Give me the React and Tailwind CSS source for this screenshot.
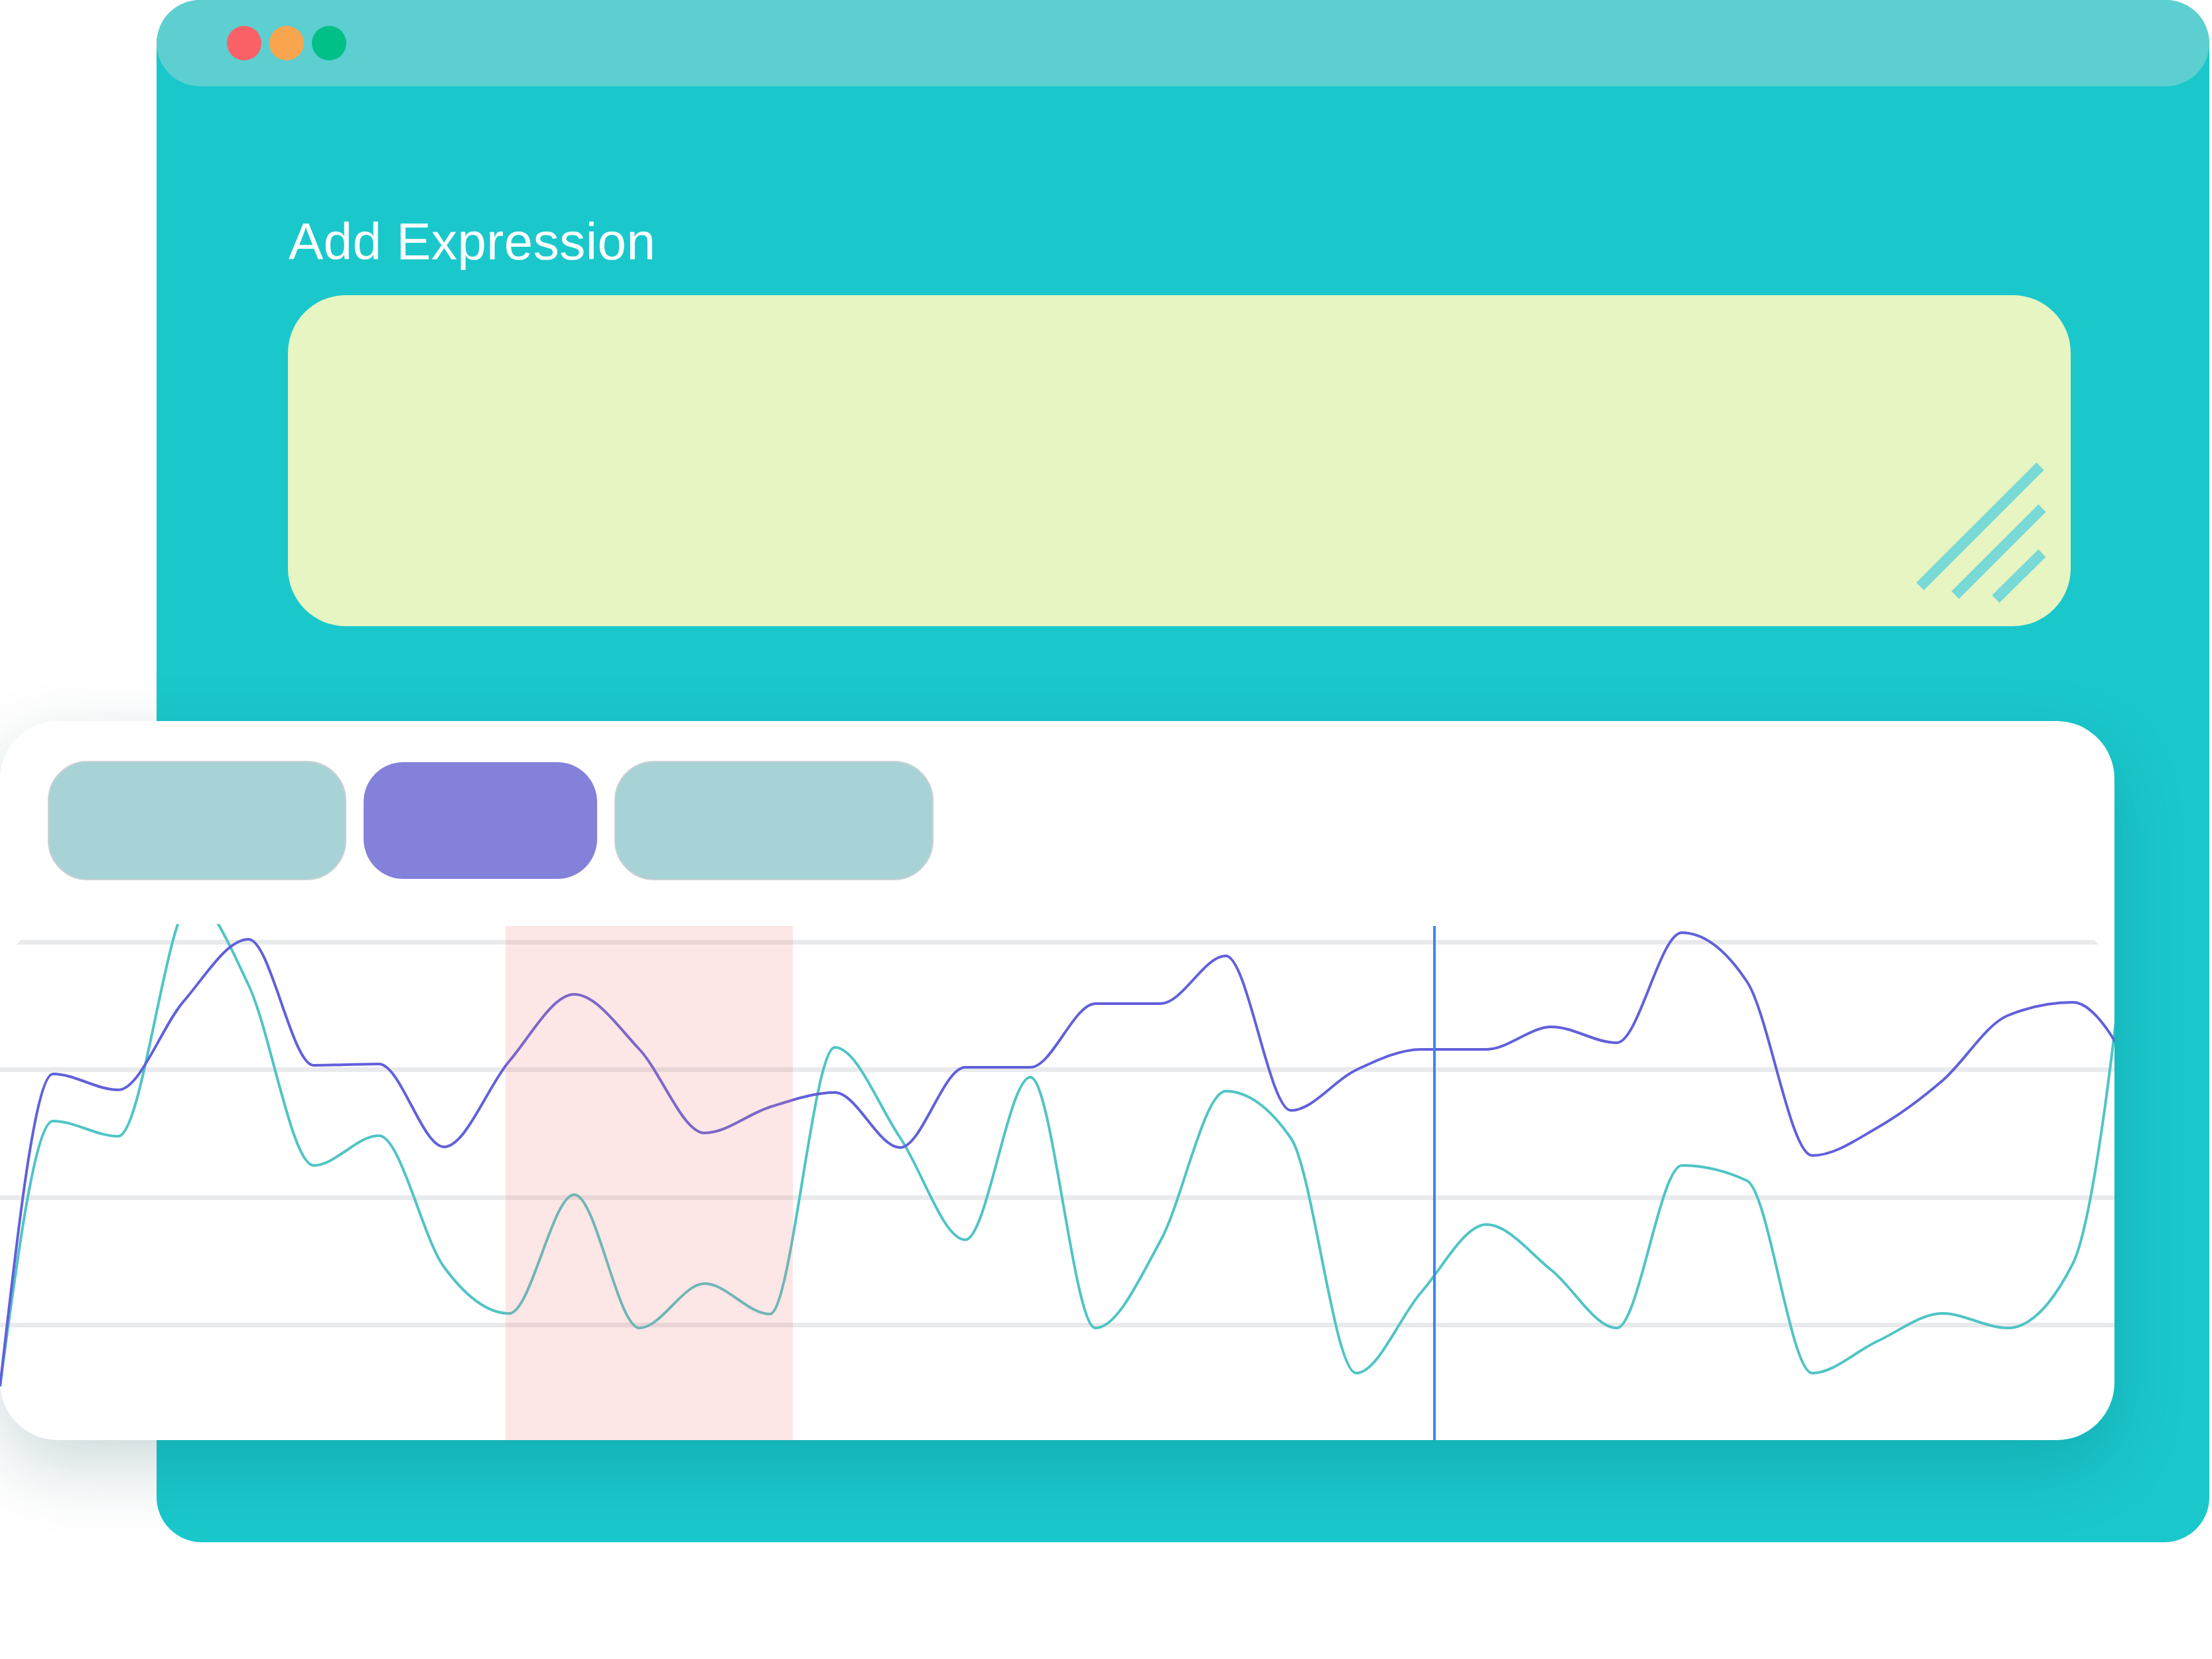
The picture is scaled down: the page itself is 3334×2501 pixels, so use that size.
import React from "react";

// the series sit on a regular x grid (x = 80 + 98.2k); y is in page pixels
const STEP = 98.2;
const gridX = (k) => 80 + STEP * k;

const purpleY = [
  1619, 1643, 1510, 1416, 1606, 1604, 1729, 1600, 1499, 1582, 1708, 1669, 1647,
  1730, 1609, 1609, 1513, 1513, 1441, 1674, 1613, 1582, 1582, 1548, 1572, 1406,
  1480, 1742, 1700, 1629, 1531, 1511, 1630,
];

const tealY = [
  1690, 1713, 1357, 1485, 1757, 1712, 1910, 1980, 1801, 2002, 1935, 1981, 1579,
  1715, 1869, 1624, 2002, 1870, 1645, 1716, 2070, 1948, 1846, 1915, 2002, 1757,
  1780, 2070, 2022, 1980, 2002, 1905, 1250,
];

// the teal spike near the top sits a little right of its grid slot
const tealX = { 2: 290 };

const toPoints = (ys, xs = {}) => [[0, 2090], ...ys.map((y, k) => [xs[k] ?? gridX(k), y])];

// monotone-x cubic, same idea as d3.curveMonotoneX
const monotonePath = (pts) => {
  const n = pts.length;
  const sign = (v) => (v < 0 ? -1 : 1);
  const t = new Array(n).fill(0);
  for (let i = 1; i < n - 1; i++) {
    const [x0, y0] = pts[i - 1];
    const [x1, y1] = pts[i];
    const [x2, y2] = pts[i + 1];
    const h0 = x1 - x0;
    const h1 = x2 - x1;
    const s0 = (y1 - y0) / h0;
    const s1 = (y2 - y1) / h1;
    const p = (s0 * h1 + s1 * h0) / (h0 + h1);
    t[i] = (sign(s0) + sign(s1)) * Math.min(Math.abs(s0), Math.abs(s1), 0.5 * Math.abs(p)) || 0;
  }
  const hA = pts[1][0] - pts[0][0];
  t[0] = (3 * (pts[1][1] - pts[0][1]) / hA - t[1]) / 2;
  const hB = pts[n - 1][0] - pts[n - 2][0];
  t[n - 1] = (3 * (pts[n - 1][1] - pts[n - 2][1]) / hB - t[n - 2]) / 2;

  let d = `M${pts[0][0]},${pts[0][1]}`;
  for (let i = 0; i < n - 1; i++) {
    const [x0, y0] = pts[i];
    const [x1, y1] = pts[i + 1];
    const dx = (x1 - x0) / 3;
    d += ` C${x0 + dx},${y0 + dx * t[i]} ${x1 - dx},${y1 - dx * t[i + 1]} ${x1},${y1}`;
  }
  return d;
};

const Chart = () => (
  <svg width="3187" height="778" viewBox="0 1393 3187 778" className="block">
    <polygon points="32,1417 3156,1417 3163,1424 24,1424" fill="#e9eaec" />
    <rect x="0" y="1609" width="3187" height="7" fill="#e9eaec" />
    <rect x="0" y="1802" width="3187" height="7" fill="#e9eaec" />
    <rect x="0" y="1994" width="3187" height="7" fill="#e9eaec" />
    <path d={monotonePath(toPoints(tealY, tealX))} fill="none" stroke="#50c4c5" strokeWidth="4" />
    <path d={monotonePath(toPoints(purpleY))} fill="none" stroke="#6160db" strokeWidth="4" />
    <rect x="762" y="1396" width="433" height="780" fill="rgba(240,128,128,0.2)" />
    <rect x="2160" y="1396" width="4" height="780" fill="#3d85f4" />
  </svg>
);

const ResizeHandle = () => (
  <svg width="210" height="220" viewBox="0 0 210 220">
    <g stroke="#78d9d6" strokeWidth="16" strokeLinecap="butt">
      <line x1="10" y1="189" x2="191" y2="8" />
      <line x1="63" y1="202" x2="194" y2="71" />
      <line x1="124" y1="208" x2="194" y2="139" />
    </g>
  </svg>
);

export default function App() {
  return (
    <div className="w-[3334px] h-[2501px] bg-white pl-[236px] overflow-hidden">
      <div className="w-[3094px] h-[2325px] rounded-[68px] bg-[#1ac8cc] flex flex-col">
        <div className="h-[130px] w-full rounded-full bg-[#5dcfd0] flex items-center gap-[12px] pl-[106px]">
          <span className="w-[52px] h-[52px] rounded-full bg-[#f96167]" />
          <span className="w-[52px] h-[52px] rounded-full bg-[#f9a54f]" />
          <span className="w-[52px] h-[52px] rounded-full bg-[#00c088]" />
        </div>

        <div className="ml-[199px] mt-[195px] text-[78px] leading-none tracking-[0.5px] text-white font-['Liberation_Sans',Arial,sans-serif]">
          Add Expression
        </div>

        <div className="ml-[198px] mt-[42px] w-[2687px] h-[499px] rounded-[87px] bg-[#e6f5c1] flex items-end justify-end pr-[27px] pb-[29px]">
          <ResizeHandle />
        </div>

        <div className="-ml-[236px] mt-[143px] w-[3187px] h-[1084px] shrink-0 bg-white rounded-[87px] overflow-hidden shadow-[0_40px_110px_rgba(0,70,80,0.2)] flex flex-col">
          <div className="flex items-center gap-[26px] pt-[60px] pl-[72px]">
            <div className="w-[450px] h-[180px] rounded-[60px] bg-[#a8d3d6] border-2 border-[#c9d1d3]" />
            <div className="w-[352px] h-[176px] rounded-[60px] bg-[#8481db]" />
            <div className="w-[481px] h-[180px] rounded-[60px] bg-[#a8d3d6] border-2 border-[#c9d1d3]" />
          </div>
          <div className="mt-[66px]">
            <Chart />
          </div>
        </div>
      </div>
    </div>
  );
}
